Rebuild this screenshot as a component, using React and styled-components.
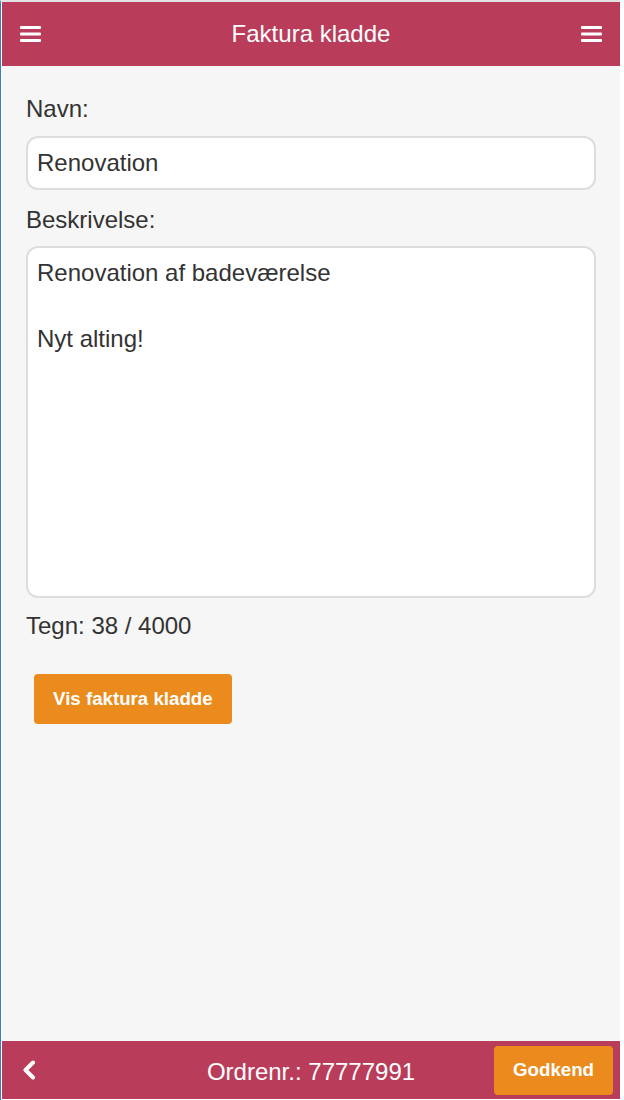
import React from 'react'
import styled, { createGlobalStyle } from 'styled-components'

const GlobalStyle = createGlobalStyle`
  html, body {
    margin: 0;
    padding: 0;
    background: #ffffff;
  }
  body {
    font-family: "Liberation Sans", Arial, sans-serif;
  }
  * {
    box-sizing: border-box;
  }
`

const Frame = styled.div`
  width: 620px;
  height: 1100px;
  display: flex;
  flex-direction: column;
  border-top: 2px solid #e2e2e2;
  border-left: 1px solid #3a7cc4;
  padding-left: 1px;
  padding-bottom: 1px;
  background: #ffffff;
`

const Bar = styled.div`
  display: grid;
  grid-template-columns: 1fr auto 1fr;
  align-items: center;
  height: ${p => p.$height}px;
  padding: 0 ${p => p.$padX}px;
  background: #b93d5a;
  color: #ffffff;
  flex-shrink: 0;
`

const BarTitle = styled.div`
  font-size: 24px;
  line-height: 28px;
  white-space: nowrap;
  padding-top: ${p => p.$offset || 0}px;
`

const IconSlot = styled.div`
  display: flex;
  justify-content: ${p => (p.$end ? 'flex-end' : 'flex-start')};
  align-items: center;
  padding-left: ${p => p.$inset || 0}px;
`

const Content = styled.main`
  flex: 1;
  background: #f6f6f6;
  padding: 26px 24px 0 24px;
  color: #333333;
`

const Label = styled.label`
  display: block;
  font-size: 24px;
  line-height: 33px;
  margin-bottom: ${p => p.$gap}px;
`

const TextInput = styled.input`
  display: block;
  width: 100%;
  height: 54px;
  padding: 0 9px;
  margin-bottom: 13px;
  font-family: "Liberation Sans", Arial, sans-serif;
  font-size: 24px;
  color: #333333;
  background: #ffffff;
  border: 2px solid #dddddd;
  border-radius: 12px;
  outline: none;
`

const TextArea = styled.textarea`
  display: block;
  width: 100%;
  height: 352px;
  padding: 8px 9px;
  margin: 0 0 11px 0;
  font-family: "Liberation Sans", Arial, sans-serif;
  font-size: 24px;
  line-height: 33px;
  color: #333333;
  background: #ffffff;
  border: 2px solid #dddddd;
  border-radius: 12px;
  outline: none;
  resize: none;
`

const Counter = styled.div`
  font-size: 24px;
  line-height: 33px;
`

const ActionButton = styled.button`
  height: ${p => p.$height}px;
  padding: 0 ${p => p.$padX}px;
  border: none;
  border-radius: 4px;
  background: #eb8b1d;
  color: #ffffff;
  font-family: "Liberation Sans", Arial, sans-serif;
  font-weight: bold;
  font-size: 18.7px;
  cursor: pointer;
`

const ButtonRow = styled.div`
  margin-top: 32px;
  padding-left: 8px;
`

const MenuIcon = () => (
  <svg width="21" height="16" viewBox="0 0 21 16">
    <rect x="0" y="0" width="21" height="3" rx="1" fill="#ffffff" />
    <rect x="0" y="6.5" width="21" height="3" rx="1" fill="#ffffff" />
    <rect x="0" y="13" width="21" height="3" rx="1" fill="#ffffff" />
  </svg>
)

const BackIcon = () => (
  <svg width="14" height="20" viewBox="0 0 14 20">
    <polyline
      points="11,2.5 3.5,10 11,17.5"
      fill="none"
      stroke="#ffffff"
      strokeWidth="4"
      strokeLinecap="round"
      strokeLinejoin="round"
    />
  </svg>
)

export default function App() {
  return (
    <>
      <GlobalStyle />
      <Frame>
        <Bar $height={64} $padX={18}>
          <IconSlot>
            <MenuIcon />
          </IconSlot>
          <BarTitle>Faktura kladde</BarTitle>
          <IconSlot $end>
            <MenuIcon />
          </IconSlot>
        </Bar>

        <Content>
          <Label $gap={11}>Navn:</Label>
          <TextInput defaultValue="Renovation" />
          <Label $gap={10}>Beskrivelse:</Label>
          <TextArea defaultValue={'Renovation af badeværelse\n\nNyt alting!'} />
          <Counter>Tegn: 38 / 4000</Counter>
          <ButtonRow>
            <ActionButton $height={50} $padX={19}>Vis faktura kladde</ActionButton>
          </ButtonRow>
        </Content>

        <Bar $height={58} $padX={7}>
          <IconSlot $inset={13}>
            <BackIcon />
          </IconSlot>
          <BarTitle $offset={4}>Ordrenr.: 77777991</BarTitle>
          <IconSlot $end>
            <ActionButton $height={49} $padX={19}>Godkend</ActionButton>
          </IconSlot>
        </Bar>
      </Frame>
    </>
  )
}
